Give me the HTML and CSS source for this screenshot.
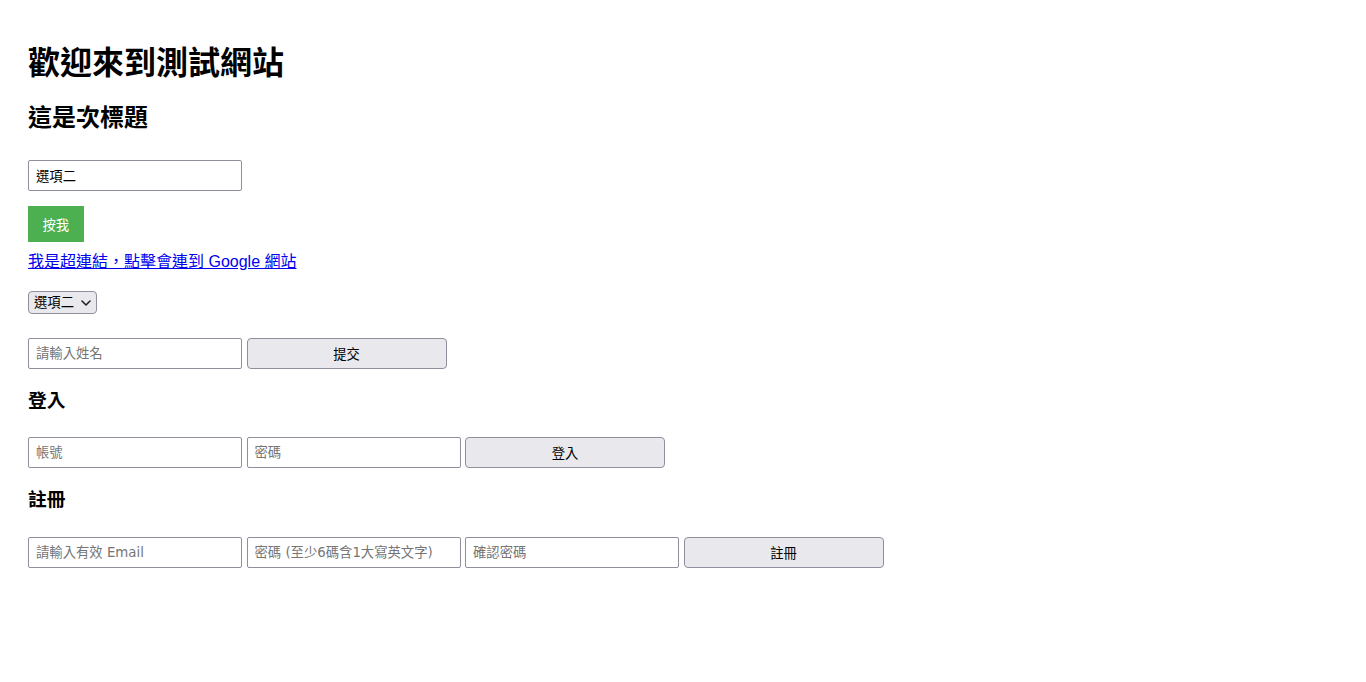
FILE: index.html
```html
<!DOCTYPE html>
<html lang="zh-Hant">
<head>
<meta charset="utf-8">
<title>測試網站</title>
<link rel="stylesheet" href="styles.css">
</head>
<body>
<main class="page">
  <h1 class="title">歡迎來到測試網站</h1>
  <h2 class="subtitle">這是次標題</h2>

  <div class="row row-first">
    <input class="field" type="text" value="選項二">
  </div>

  <button class="btn-green" type="button">按我</button>

  <a class="link" href="#">我是超連結，點擊會連到 Google 網站</a>

  <div class="select-wrap">
    <select class="select">
      <option>選項一</option>
      <option selected>選項二</option>
      <option>選項三</option>
    </select>
    <svg class="chev" width="10" height="6" viewBox="0 0 10 6"><path d="M1 1l4 4 4-4" fill="none" stroke="#222" stroke-width="1.6" stroke-linecap="round" stroke-linejoin="round"/></svg>
  </div>

  <div class="row row-name">
    <input class="field" type="text" placeholder="請輸入姓名">
    <button class="btn" type="button">提交</button>
  </div>

  <h3 class="section">登入</h3>
  <div class="row row-section">
    <input class="field" type="text" placeholder="帳號">
    <input class="field" type="password" placeholder="密碼">
    <button class="btn" type="button">登入</button>
  </div>

  <h3 class="section">註冊</h3>
  <div class="row row-section">
    <input class="field" type="email" placeholder="請輸入有效 Email">
    <input class="field" type="password" placeholder="密碼 (至少6碼含1大寫英文字)">
    <input class="field" type="password" placeholder="確認密碼">
    <button class="btn" type="button">註冊</button>
  </div>
</main>
</body>
</html>
```

FILE: styles.css
```css
* { box-sizing: border-box; }

html, body {
  margin: 0;
  padding: 0;
  background: #ffffff;
}

body {
  font-family: "Liberation Sans", "Noto Sans CJK TC", sans-serif;
  color: #000;
}

.page {
  display: flex;
  flex-direction: column;
  align-items: flex-start;
  padding: 0 28px 40px;
}

.title {
  margin: 43px 0 0;
  font-size: 32px;
  line-height: 40px;
  font-weight: bold;
}

.subtitle {
  margin: 20px 0 0;
  font-size: 24px;
  line-height: 30px;
  font-weight: bold;
}

.section {
  margin: 20px 0 0;
  font-size: 18.72px;
  line-height: 24px;
  font-weight: bold;
}

.row {
  display: flex;
  gap: 4.5px;
  align-items: center;
}

.row-first { margin-top: 27px; }
.row-name { margin-top: 24px; }
.row-section { margin-top: 24px; }
.row-section:last-child { margin-top: 25px; }

.field {
  width: 214px;
  height: 31px;
  padding: 0 7px;
  border: 1px solid #8f8f9d;
  border-radius: 2px;
  background: #fff;
  font-family: "DejaVu Sans", "Noto Sans CJK TC", sans-serif;
  font-size: 13.33px;
  color: #000;
}

.field::placeholder {
  color: #757575;
}

.btn {
  width: 200px;
  height: 31px;
  border: 1px solid #8f8f9d;
  border-radius: 4px;
  background: #e9e9ed;
  font-family: "DejaVu Sans", "Noto Sans CJK TC", sans-serif;
  font-size: 13.33px;
  color: #000;
  padding: 0;
}

.btn-green {
  margin-top: 15px;
  height: 36px;
  padding: 0 14.5px;
  border: none;
  background: #4caf50;
  color: #ffffff;
  font-family: "DejaVu Sans", "Noto Sans CJK TC", sans-serif;
  font-size: 13.33px;
}

.link {
  margin-top: 10px;
  font-size: 16px;
  line-height: 20px;
  color: #0000ee;
  text-decoration: underline;
}

.select-wrap {
  position: relative;
  margin-top: 19px;
  display: inline-flex;
}

.select {
  appearance: none;
  -webkit-appearance: none;
  height: 23px;
  padding: 0 22px 0 5px;
  border: 1px solid #8f8f9d;
  border-radius: 4px;
  background: #e9e9ed;
  font-family: "DejaVu Sans", "Noto Sans CJK TC", sans-serif;
  font-size: 13.33px;
  color: #000;
}

.chev {
  position: absolute;
  right: 6px;
  top: 9px;
  pointer-events: none;
}
```
